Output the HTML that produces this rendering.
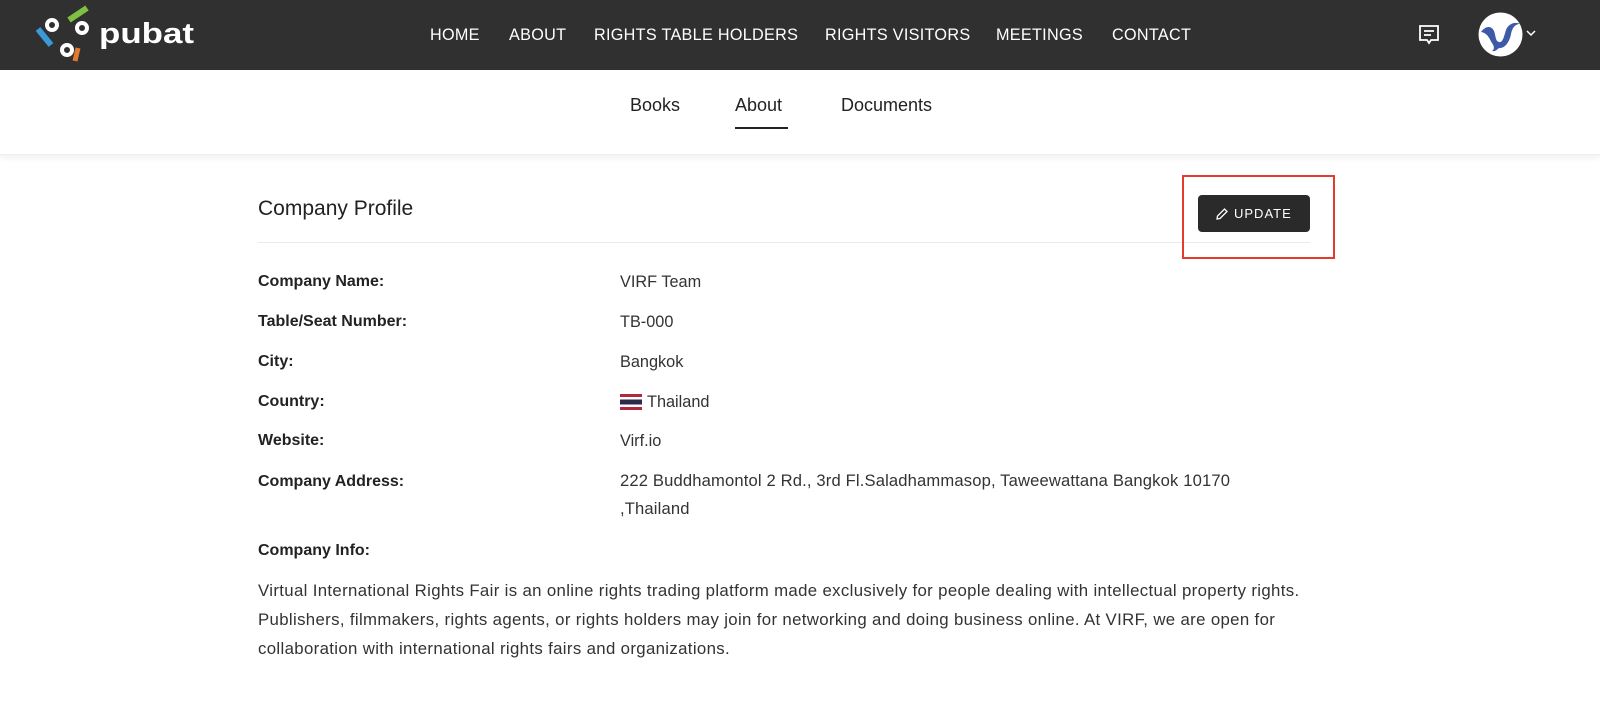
<!DOCTYPE html>
<html><head><meta charset="utf-8"><style>
*{margin:0;padding:0;box-sizing:border-box}
body{width:1600px;height:715px;overflow:hidden;background:#fff;font-family:"Liberation Sans",sans-serif;color:#222}
.top{position:absolute;left:0;top:0;width:1600px;height:70px;background:#303030}
.nav{position:absolute;top:26px;font-size:16.2px;color:#fff;letter-spacing:.3px}
.sub{position:absolute;top:70px;left:0;width:1600px;height:85px;background:#fff;box-shadow:0 3px 6px rgba(0,0,0,.06);border-bottom:1px solid #f0f0f0}
.tab{position:absolute;top:95px;font-size:18px;color:#222}
.lbl{position:absolute;left:258px;font-size:16px;color:#222;font-weight:bold}
.val{position:absolute;left:620px;font-size:16.3px;color:#333}
</style></head><body>
<div class="top">
<svg style="position:absolute;left:0;top:0" width="220" height="70" viewBox="0 0 220 70">
<line x1="38" y1="29" x2="51" y2="45" stroke="#3a9ad9" stroke-width="6"/>
<line x1="69" y1="20" x2="87" y2="8" stroke="#7dc043" stroke-width="6"/>
<line x1="78" y1="48" x2="75" y2="61" stroke="#e07a2e" stroke-width="5"/>
<circle cx="52" cy="25" r="5" fill="none" stroke="#fff" stroke-width="4"/>
<circle cx="82" cy="28" r="5" fill="none" stroke="#fff" stroke-width="4"/>
<circle cx="67" cy="50" r="5" fill="none" stroke="#fff" stroke-width="4"/>
<text x="99" y="43" fill="#fff" font-family="Liberation Sans" font-weight="bold" font-size="29" textLength="95" lengthAdjust="spacingAndGlyphs">pubat</text>
</svg>
<div class="nav" style="left:430px">HOME</div>
<div class="nav" style="left:509px">ABOUT</div>
<div class="nav" style="left:594px">RIGHTS TABLE HOLDERS</div>
<div class="nav" style="left:825px">RIGHTS VISITORS</div>
<div class="nav" style="left:996px">MEETINGS</div>
<div class="nav" style="left:1112px">CONTACT</div>
<svg style="position:absolute;left:1418px;top:24px" width="22" height="22" viewBox="0 0 22 22" fill="none" stroke="#fff" stroke-width="1.8"><path d="M2 2h18v14h-7l-2 3-2-3H2z"/><path d="M6 7h10M6 11h7"/></svg>
<svg style="position:absolute;left:1478px;top:12px" width="45" height="45" viewBox="0 0 45 45"><circle cx="22.5" cy="22.5" r="22" fill="#fff"/><path d="M3 20c5-7 11-6 13-1s1 10 5 11 5-6 7-12 9-9 14-6c-5 0-8 4-9 10s-5 14-11 14c-3 0-3 4-8 3 3-2 2-5 0-8s-4-10-11-11z" fill="#3c5aa6"/></svg>
<svg style="position:absolute;left:1526px;top:30px" width="10" height="7" viewBox="0 0 10 7"><path d="M1 1l4 4 4-4" stroke="#fff" fill="none" stroke-width="1.5"/></svg>
</div>
<div class="sub"></div>
<div class="tab" style="left:630px">Books</div>
<div class="tab" style="left:735px">About</div>
<div style="position:absolute;left:735px;top:127px;width:53px;height:2px;background:#222"></div>
<div class="tab" style="left:841px">Documents</div>
<div style="position:absolute;left:258px;top:197px;font-size:21px;color:#222">Company Profile</div>
<div style="position:absolute;left:258px;top:242px;width:1052px;height:1px;background:#eaeaea"></div>
<div style="position:absolute;left:1182px;top:175px;width:153px;height:84px;border:2px solid #e53b2c"></div>
<div style="position:absolute;left:1198px;top:195px;width:112px;height:37px;background:#2a2a2a;border-radius:4px;color:#fff;font-size:13px;letter-spacing:1px;line-height:37px;padding-left:36px">UPDATE</div>
<svg style="position:absolute;left:1216px;top:208px" width="12" height="12" viewBox="0 0 12 12" fill="none" stroke="#fff" stroke-width="1.3"><path d="M1 11l.5-3L8.5 1l2.5 2.5-7 7z"/></svg>
<div class="lbl" style="top:273px">Company Name:</div><div class="val" style="top:273px">VIRF Team</div>
<div class="lbl" style="top:313px">Table/Seat Number:</div><div class="val" style="top:313px">TB-000</div>
<div class="lbl" style="top:353px">City:</div><div class="val" style="top:353px">Bangkok</div>
<div class="lbl" style="top:393px">Country:</div>
<svg style="position:absolute;left:620px;top:394px" width="22" height="16" viewBox="0 0 22 16"><rect width="22" height="16" fill="#b3283d"/><rect y="3" width="22" height="10" fill="#fff"/><rect y="5.5" width="22" height="5" fill="#2d2a4a"/></svg>
<div class="val" style="top:393px;left:647px">Thailand</div>
<div class="lbl" style="top:432px">Website:</div><div class="val" style="top:432px">Virf.io</div>
<div class="lbl" style="top:473px">Company Address:</div>
<div class="val" style="top:467px;line-height:28px;font-size:16.6px;letter-spacing:.15px">222 Buddhamontol 2 Rd., 3rd Fl.Saladhammasop, Taweewattana Bangkok 10170<br>,Thailand</div>
<div class="lbl" style="top:542px">Company Info:</div>
<div style="position:absolute;left:258px;top:576px;width:1100px;font-size:16.8px;letter-spacing:.35px;line-height:29px;color:#333;white-space:nowrap">Virtual International Rights Fair is an online rights trading platform made exclusively for people dealing with intellectual property rights.<br>Publishers, filmmakers, rights agents, or rights holders may join for networking and doing business online. At VIRF, we are open for<br>collaboration with international rights fairs and organizations.</div>
</body></html>
